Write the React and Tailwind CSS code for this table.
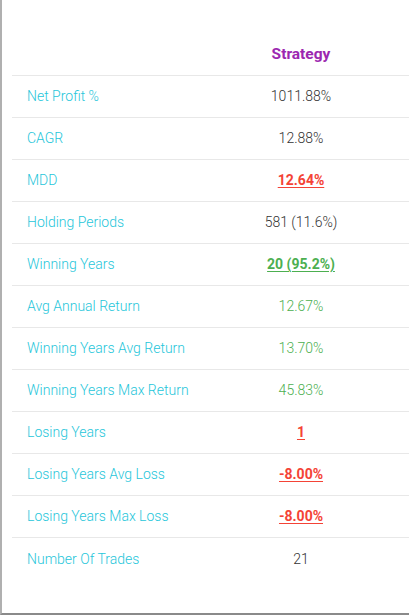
const rows = [
  { label: 'Net Profit %', value: '1011.88%' },
  { label: 'CAGR', value: '12.88%' },
  { label: 'MDD', value: '12.64%', tone: 'bad' },
  { label: 'Holding Periods', value: '581 (11.6%)' },
  { label: 'Winning Years', value: '20 (95.2%)', tone: 'good' },
  { label: 'Avg Annual Return', value: '12.67%', tone: 'green' },
  { label: 'Winning Years Avg Return', value: '13.70%', tone: 'green' },
  { label: 'Winning Years Max Return', value: '45.83%', tone: 'green' },
  { label: 'Losing Years', value: '1', tone: 'bad' },
  { label: 'Losing Years Avg Loss', value: '-8.00%', tone: 'bad' },
  { label: 'Losing Years Max Loss', value: '-8.00%', tone: 'bad' },
  { label: 'Number Of Trades', value: '21' },
];

function Value({ tone, children }) {
  if (tone === 'bad') {
    return <span className="font-bold text-[#f44336] underline underline-offset-2">{children}</span>;
  }
  if (tone === 'good') {
    return <span className="font-bold text-[#4caf50] underline underline-offset-2">{children}</span>;
  }
  if (tone === 'green') {
    return <span className="font-light text-[#4caf50]">{children}</span>;
  }
  return <span className="font-light text-[#333]">{children}</span>;
}

export default function App() {
  return (
    <div
      className="w-[409px] h-[615px] bg-white border-l-2 border-b-2 border-l-[#b0b0b0] border-b-[#8a8a8a] pl-[10px] pt-[34px]"
      style={{ fontFamily: 'Roboto, "Liberation Sans", sans-serif' }}
    >
      <div className="grid grid-cols-[181px_1fr] border-b border-[#e8e8e8] h-[42px] items-center">
        <div />
        <div className="text-center text-[15.5px] font-bold text-[#9c27b0] pt-px">Strategy</div>
      </div>
      {rows.map((r, i) => (
        <div
          key={r.label}
          className={`grid grid-cols-[181px_1fr] h-[42px] items-center text-sm pb-px ${
            i < rows.length - 1 ? 'border-b border-[#e8e8e8]' : ''
          }`}
        >
          <div className="pl-[15px] font-light text-[#26c6da]">{r.label}</div>
          <div className="text-center">
            <Value tone={r.tone}>{r.value}</Value>
          </div>
        </div>
      ))}
    </div>
  );
}
